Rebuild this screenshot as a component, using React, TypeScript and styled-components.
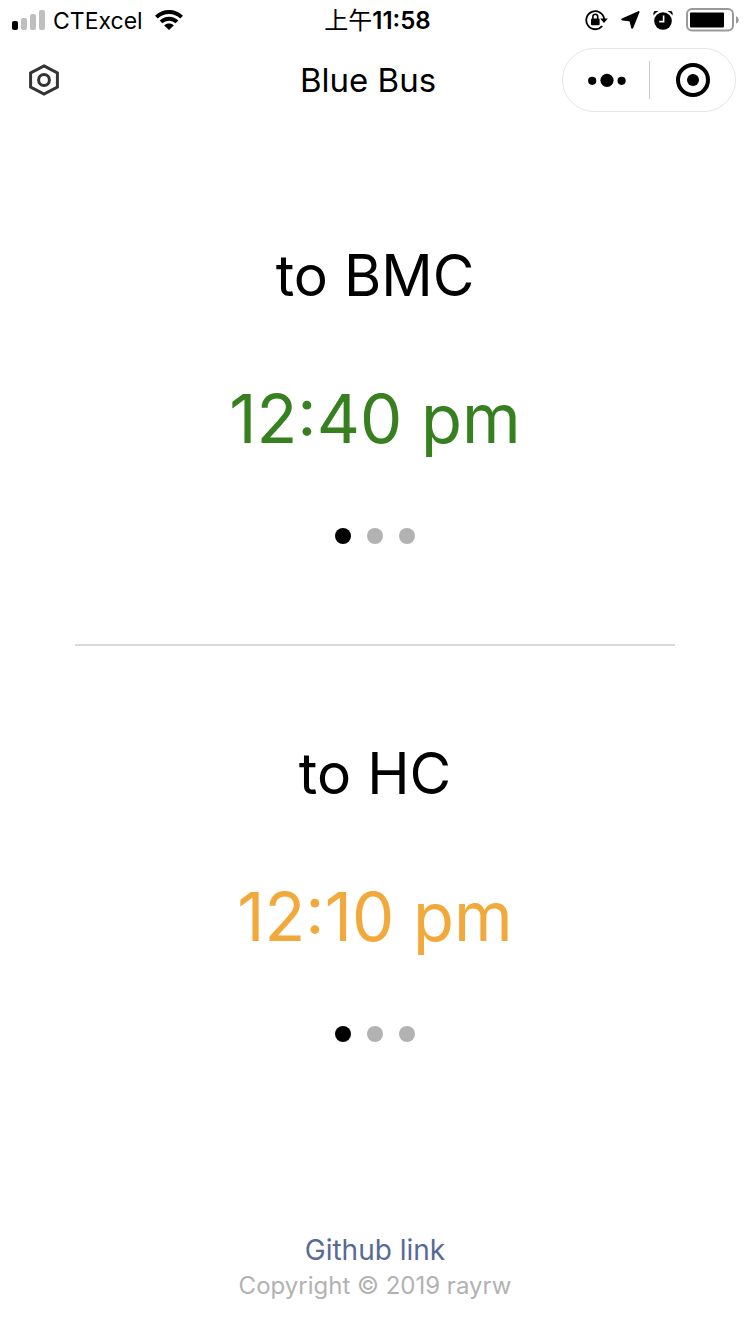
import React, { useState } from 'react';
import styled, { createGlobalStyle } from 'styled-components';

const GlobalStyle = createGlobalStyle`
  *, *::before, *::after { box-sizing: border-box; }
  body {
    margin: 0;
    background: #fff;
    color: #000;
    font-family: Inter, "Noto Sans CJK SC", sans-serif;
  }
  button {
    padding: 0;
    border: 0;
    background: none;
    color: inherit;
    font: inherit;
    cursor: pointer;
  }
  svg { display: block; }
`;

const Page = styled.div`
  display: flex;
  flex-direction: column;
  min-height: 100vh;
`;

const StatusBar = styled.div`
  display: grid;
  grid-template-columns: 1fr auto 1fr;
  align-items: center;
  height: 40px;
  padding: 0 11px 0 12px;
  line-height: 38px;
`;

const StatusGroup = styled.div<{ $end?: boolean }>`
  display: flex;
  align-items: center;
  justify-content: ${(p) => (p.$end ? 'flex-end' : 'flex-start')};
  gap: ${(p) => (p.$end ? '13px' : '8px')};
`;

const Carrier = styled.span`
  padding-top: 2px;
  margin-right: 4px;
  font-size: 23px;
`;

const Clock = styled.time`
  display: flex;
  align-items: center;
  padding: 2px 0 0 4px;
  font-size: 24px;
`;

const Digits = styled.span`
  font-weight: 600;
`;

const NavBar = styled.header`
  display: grid;
  grid-template-columns: 1fr auto 1fr;
  align-items: center;
  height: 80px;
  padding-right: 14px;
`;

const SettingsButton = styled.button`
  justify-self: start;
  margin-left: 28px;
`;

const Title = styled.h1`
  margin: 0;
  font-size: 33px;
  font-weight: 400;
  line-height: 40px;
`;

const Capsule = styled.div`
  display: flex;
  align-items: center;
  justify-self: end;
  width: 174px;
  height: 64px;
  border: 1px solid #e5e5e5;
  border-radius: 32px;
`;

const CapsuleButton = styled.button`
  display: flex;
  flex: 1;
  align-items: center;
  justify-content: center;
  height: 100%;
  padding-left: 2px;
`;

const CapsuleRule = styled.span`
  width: 1px;
  height: 38px;
  background: #c8c8c8;
`;

const Main = styled.main`
  display: flex;
  flex-direction: column;
  align-items: center;
  padding-top: 28px;
`;

const Route = styled.section`
  display: flex;
  flex-direction: column;
  align-items: center;
  gap: 67px;
  padding: 93px 0 100px;
`;

const Destination = styled.h2`
  margin: 0;
  font-size: 57px;
  font-weight: 400;
  line-height: 69px;
`;

const Departure = styled.p<{ $color: string }>`
  margin: 0;
  color: ${(p) => p.$color};
  font-size: 67px;
  line-height: 84px;
`;

const Dots = styled.div`
  display: flex;
  gap: 16px;
`;

const Dot = styled.button<{ $active: boolean }>`
  width: 16px;
  height: 16px;
  border-radius: 50%;
  background: ${(p) => (p.$active ? '#000' : '#b2b2b2')};
`;

const Divider = styled.hr`
  width: 80%;
  height: 2px;
  margin: 0;
  border: 0;
  background: #d8d8d8;
`;

const Footer = styled.footer`
  display: flex;
  flex-direction: column;
  align-items: center;
  margin-top: auto;
  padding: 24px 0 30px;
  line-height: 36px;
`;

const FooterLink = styled.a`
  color: #576b95;
  font-size: 28px;
  text-decoration: none;
`;

const Copyright = styled.p`
  margin: 0;
  color: #b2b2b2;
  font-size: 24px;
`;

const SignalIcon = () => (
  <svg width="33" height="20" viewBox="0 0 33 20" aria-hidden="true">
    <rect x="0" y="11" width="6" height="9" rx="2" />
    <g fill="#bfbfbf">
      <rect x="9" y="8" width="6" height="12" rx="2" />
      <rect x="18" y="4" width="6" height="16" rx="2" />
      <rect x="27" y="0" width="6" height="20" rx="2" />
    </g>
  </svg>
);

const WifiIcon = () => (
  <svg width="28" height="20" viewBox="0 0 28 20" aria-hidden="true">
    <g fill="none" stroke="#000" strokeWidth="3.9">
      <path d="M1.4 7.2C8.4 0.3 19.6 0.3 26.6 7.2" />
      <path d="M6 11.9C10.4 7.6 17.6 7.6 22 11.9" />
    </g>
    <path d="M14 20L9.2 15.4C11.8 12.9 16.2 12.9 18.8 15.4Z" />
  </svg>
);

const RotationLockIcon = () => (
  <svg width="23" height="22" viewBox="0 0 23 22" aria-hidden="true">
    <path
      d="M17.2 17A9 9 0 1 1 19.2 10"
      fill="none"
      stroke="#000"
      strokeWidth="1.8"
    />
    <path d="M15.2 9.6H22.8L19 14Z" />
    <rect x="6" y="9.6" width="8.6" height="6.6" rx="1" />
    <path d="M7.9 10V7.6a2.4 2.4 0 0 1 4.8 0V10" fill="none" stroke="#000" strokeWidth="1.6" />
  </svg>
);

const LocationIcon = () => (
  <svg width="19" height="18" viewBox="0 0 19 18" aria-hidden="true">
    <path d="M17.2 0.2C18.1-0.2 18.8 0.5 18.4 1.4L12.2 17C11.8 18 10.3 17.9 10.1 16.8L8.8 10.9Q8.6 10.3 8 10.2L1.2 9.5C0 9.3-0.1 8.1 0.9 7.6Z" />
  </svg>
);

const AlarmIcon = () => (
  <svg width="20" height="20" viewBox="0 0 20 20" aria-hidden="true">
    <circle cx="10" cy="11" r="8.8" />
    <path d="M0.4 5.4V3.2Q0.4 1 2.6 1H5.6Q2.2 2.6 0.4 5.4ZM19.6 5.4V3.2Q19.6 1 17.4 1H14.4Q17.8 2.6 19.6 5.4Z" />
    <path d="M10.6 5.4V11.6H6.2" fill="none" stroke="#fff" strokeWidth="1.6" />
  </svg>
);

const BatteryIcon = () => (
  <svg width="53" height="24" viewBox="0 0 53 24" aria-hidden="true">
    <rect x="1" y="1" width="46" height="21.6" rx="5" fill="none" stroke="#999" strokeWidth="2" />
    <rect x="4" y="4.4" width="34" height="15" rx="1" />
    <path d="M50 8.2C53.6 9.4 53.6 14.4 50 15.6Z" fill="#999" />
  </svg>
);

const SettingsIcon = () => (
  <svg width="32" height="32" viewBox="0 0 32 32" fill="none" stroke="#333" strokeWidth="3" aria-hidden="true">
    <path d="M16 1.9L29.4 9V23L16 30.1L2.6 23V9Z" />
    <circle cx="16" cy="16" r="5.4" />
  </svg>
);

const MoreIcon = () => (
  <svg width="38" height="14" viewBox="0 0 38 14" aria-hidden="true">
    <circle cx="4.2" cy="7.8" r="4.1" />
    <circle cx="19" cy="7.3" r="6.6" />
    <circle cx="33.6" cy="7.8" r="4.1" />
  </svg>
);

const TargetIcon = () => (
  <svg width="34" height="34" viewBox="0 0 34 34" aria-hidden="true">
    <circle cx="17" cy="17" r="15" fill="none" stroke="#000" strokeWidth="4" />
    <circle cx="17" cy="17" r="6" />
  </svg>
);

interface RouteCardProps {
  destination: string;
  time: string;
  color: string;
}

function RouteCard({ destination, time, color }: RouteCardProps) {
  const [active, setActive] = useState(0);
  return (
    <Route>
      <Destination>{destination}</Destination>
      <Departure $color={color}>{time}</Departure>
      <Dots>
        {[0, 1, 2].map((i) => (
          <Dot
            key={i}
            type="button"
            $active={i === active}
            aria-label={`Departure ${i + 1}`}
            aria-pressed={i === active}
            onClick={() => setActive(i)}
          />
        ))}
      </Dots>
    </Route>
  );
}

export default function App() {
  return (
    <Page>
      <GlobalStyle />
      <StatusBar>
        <StatusGroup>
          <SignalIcon />
          <Carrier>CTExcel</Carrier>
          <WifiIcon />
        </StatusGroup>
        <Clock>
          上午<Digits>11:58</Digits>
        </Clock>
        <StatusGroup $end>
          <RotationLockIcon />
          <LocationIcon />
          <AlarmIcon />
          <BatteryIcon />
        </StatusGroup>
      </StatusBar>
      <NavBar>
        <SettingsButton type="button" aria-label="Settings">
          <SettingsIcon />
        </SettingsButton>
        <Title>Blue Bus</Title>
        <Capsule>
          <CapsuleButton type="button" aria-label="More">
            <MoreIcon />
          </CapsuleButton>
          <CapsuleRule />
          <CapsuleButton type="button" aria-label="Close">
            <TargetIcon />
          </CapsuleButton>
        </Capsule>
      </NavBar>
      <Main>
        <RouteCard destination="to BMC" time="12:40 pm" color="#368020" />
        <Divider />
        <RouteCard destination="to HC" time="12:10 pm" color="#f2a93b" />
      </Main>
      <Footer>
        <FooterLink href="#github">Github link</FooterLink>
        <Copyright>Copyright © 2019 rayrw</Copyright>
      </Footer>
    </Page>
  );
}
